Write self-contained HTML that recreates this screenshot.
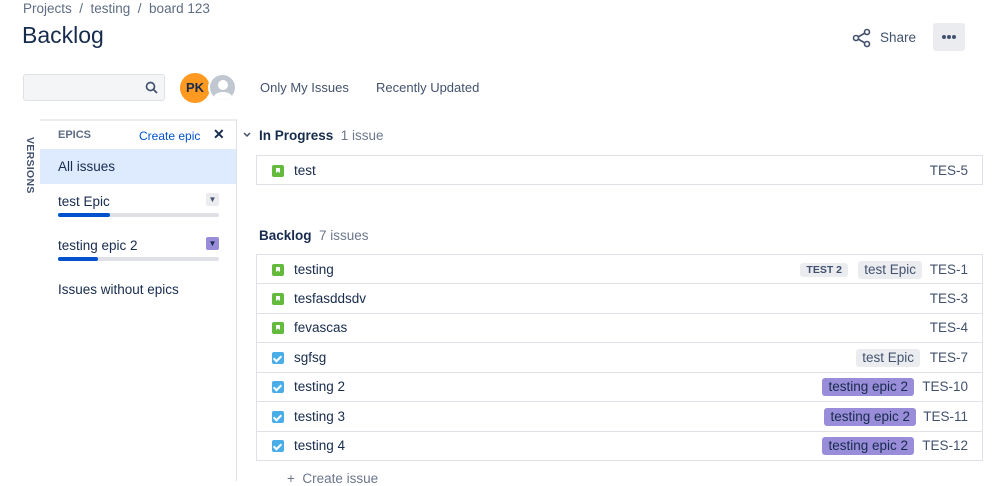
<!DOCTYPE html>
<html><head><meta charset="utf-8"><style>
*{box-sizing:border-box;margin:0;padding:0}
body{width:999px;height:481px;overflow:hidden;background:#fff;font-family:"Liberation Sans",sans-serif;color:#172b4d;position:relative}
.a{position:absolute;white-space:nowrap}
.row{position:absolute;left:256px;width:727px;height:30px;border:1px solid #dfe1e6;border-top:none;font-size:13.5px}
.row .t{position:absolute;left:37px;top:7px}
.row .k{position:absolute;right:14px;top:7px;color:#42526e}
.story{position:absolute;left:15px;top:9px;width:12px;height:12px;background:#63ba3c;border-radius:2px}
.story:after{content:"";position:absolute;left:4px;top:3px;width:4px;height:5px;background:#fff;clip-path:polygon(0 0,100% 0,100% 100%,50% 70%,0 100%)}
.task{position:absolute;left:15px;top:9px;width:12px;height:12px;background:#4bade8;border-radius:2px}
.task:after{content:"";position:absolute;left:3px;top:2px;width:3px;height:6px;border:solid #fff;border-width:0 2px 2px 0;transform:rotate(45deg)}
.ep{position:absolute;top:6px;height:18px;padding:0 6px;border-radius:3px;font-size:13.5px;line-height:18px}
.g{background:#ebecf0;color:#42526e}
.p{background:#998dd9;color:#172b4d}
</style></head><body>
<div class="a" style="left:23px;top:1px;font-size:13.5px;color:#5e6c84">Projects &nbsp;/&nbsp; testing &nbsp;/&nbsp; board 123</div>
<div class="a" style="left:22px;top:22px;font-size:23px;font-weight:500;color:#172b4d">Backlog</div>
<svg class="a" style="left:852px;top:28px" width="20" height="20" viewBox="0 0 20 20"><circle cx="15" cy="4" r="2.5" fill="none" stroke="#42526e" stroke-width="1.6"/><circle cx="4" cy="10" r="2.5" fill="none" stroke="#42526e" stroke-width="1.6"/><circle cx="15" cy="16" r="2.5" fill="none" stroke="#42526e" stroke-width="1.6"/><path d="M6 9L13 5M6 11L13 15" stroke="#42526e" stroke-width="1.6"/></svg>
<div class="a" style="left:880px;top:30px;font-size:13.5px;color:#42526e">Share</div>
<div class="a" style="left:933px;top:23px;width:32px;height:28px;background:#ebecf0;border-radius:3px"><div class="a" style="left:9px;top:12px;width:4px;height:4px;border-radius:50%;background:#42526e"></div><div class="a" style="left:14px;top:12px;width:4px;height:4px;border-radius:50%;background:#42526e"></div><div class="a" style="left:19px;top:12px;width:4px;height:4px;border-radius:50%;background:#42526e"></div></div>
<div class="a" style="left:23px;top:74px;width:142px;height:27px;background:#f4f5f7;border:1px solid #dfe1e6;border-radius:3px"></div>
<svg class="a" style="left:145px;top:81px" width="13" height="13" viewBox="0 0 13 13"><circle cx="5.5" cy="5.5" r="4" fill="none" stroke="#42526e" stroke-width="1.7"/><path d="M8.5 8.5L12 12" stroke="#42526e" stroke-width="1.8"/></svg>
<div class="a" style="left:180px;top:73px;width:30px;height:30px;border-radius:50%;background:#ff991f;font-size:13px;font-weight:bold;text-align:center;line-height:30px;color:#172b4d">PK</div>
<div class="a" style="left:208px;top:73px;width:29px;height:29px;border-radius:50%;background:#c1c7d0;border:2px solid #fff;overflow:hidden"><div class="a" style="left:8px;top:5px;width:10px;height:10px;border-radius:50%;background:#fff"></div><div class="a" style="left:3px;top:17px;width:20px;height:14px;border-radius:50% 50% 0 0;background:#fff"></div></div>
<div class="a" style="left:260px;top:80px;font-size:13px;color:#42526e">Only My Issues</div>
<div class="a" style="left:376px;top:80px;font-size:13px;color:#42526e">Recently Updated</div>
<div class="a" style="left:24px;top:137px;font-size:10.5px;font-weight:bold;color:#42526e;writing-mode:vertical-rl;letter-spacing:0.3px">VERSIONS</div>
<div class="a" style="left:40px;top:119px;width:197px;height:362px;border-top:2px solid #ebecf0;border-right:1px solid #dfe1e6"></div>
<div class="a" style="left:58px;top:129px;font-size:11px;font-weight:bold;color:#5e6c84">EPICS</div>
<div class="a" style="left:139px;top:129px;font-size:12px;color:#0052cc">Create epic</div>
<div class="a" style="left:213px;top:126px;font-size:14px;font-weight:bold">✕</div>
<div class="a" style="left:40px;top:149px;width:196px;height:35px;background:#deebff"></div>
<div class="a" style="left:58px;top:159px;font-size:13.5px">All issues</div>
<div class="a" style="left:58px;top:194px;font-size:13.5px">test Epic</div>
<div class="a" style="left:206px;top:193px;width:13px;height:13px;background:#ebecf0;border-radius:2px;font-size:8px;text-align:center;line-height:13px;color:#42526e">▼</div>
<div class="a" style="left:58px;top:213px;width:161px;height:4px;background:#dfe1e6;border-radius:2px"><div style="width:52px;height:4px;background:#0052cc;border-radius:2px"></div></div>
<div class="a" style="left:58px;top:238px;font-size:13.5px">testing epic 2</div>
<div class="a" style="left:206px;top:237px;width:13px;height:13px;background:#998dd9;border-radius:2px;font-size:8px;text-align:center;line-height:13px;color:#172b4d">▼</div>
<div class="a" style="left:58px;top:257px;width:161px;height:4px;background:#dfe1e6;border-radius:2px"><div style="width:40px;height:4px;background:#0052cc;border-radius:2px"></div></div>
<div class="a" style="left:58px;top:282px;font-size:13.5px">Issues without epics</div>
<svg class="a" style="left:243px;top:132px" width="8" height="6" viewBox="0 0 8 6"><path d="M1 1L4 4L7 1" fill="none" stroke="#42526e" stroke-width="1.5"/></svg>
<div class="a" style="left:259px;top:128px;font-size:13.5px;font-weight:bold">In Progress <span style="font-weight:normal;color:#6b778c">&nbsp;1 issue</span></div>
<div class="row" style="top:155px;border-top:1px solid #dfe1e6"><div class="story"></div><div class="t">test</div><div class="k">TES-5</div></div>
<div class="a" style="left:259px;top:228px;font-size:13.5px;font-weight:bold">Backlog <span style="font-weight:normal;color:#6b778c">&nbsp;7 issues</span></div>
<div class="row" style="top:254px;border-top:1px solid #dfe1e6"><div class="story"></div><div class="t">testing</div><div class="ep g" style="right:134px;top:8px;height:14px;line-height:14px;font-size:10.5px;font-weight:bold;padding:0 6px">TEST 2</div><div class="ep g" style="right:60px">test Epic</div><div class="k">TES-1</div></div>
<div class="row" style="top:284px"><div class="story"></div><div class="t">tesfasddsdv</div><div class="k">TES-3</div></div>
<div class="row" style="top:313px"><div class="story"></div><div class="t">fevascas</div><div class="k">TES-4</div></div>
<div class="row" style="top:343px"><div class="task"></div><div class="t">sgfsg</div><div class="ep g" style="right:62px">test Epic</div><div class="k">TES-7</div></div>
<div class="row" style="top:372px"><div class="task"></div><div class="t">testing 2</div><div class="ep p" style="right:68px">testing epic 2</div><div class="k">TES-10</div></div>
<div class="row" style="top:402px"><div class="task"></div><div class="t">testing 3</div><div class="ep p" style="right:66px">testing epic 2</div><div class="k">TES-11</div></div>
<div class="row" style="top:431px"><div class="task"></div><div class="t">testing 4</div><div class="ep p" style="right:68px">testing epic 2</div><div class="k">TES-12</div></div>
<div class="a" style="left:287px;top:471px;font-size:13.5px;color:#6b778c">+ &nbsp;Create issue</div>
</body></html>
